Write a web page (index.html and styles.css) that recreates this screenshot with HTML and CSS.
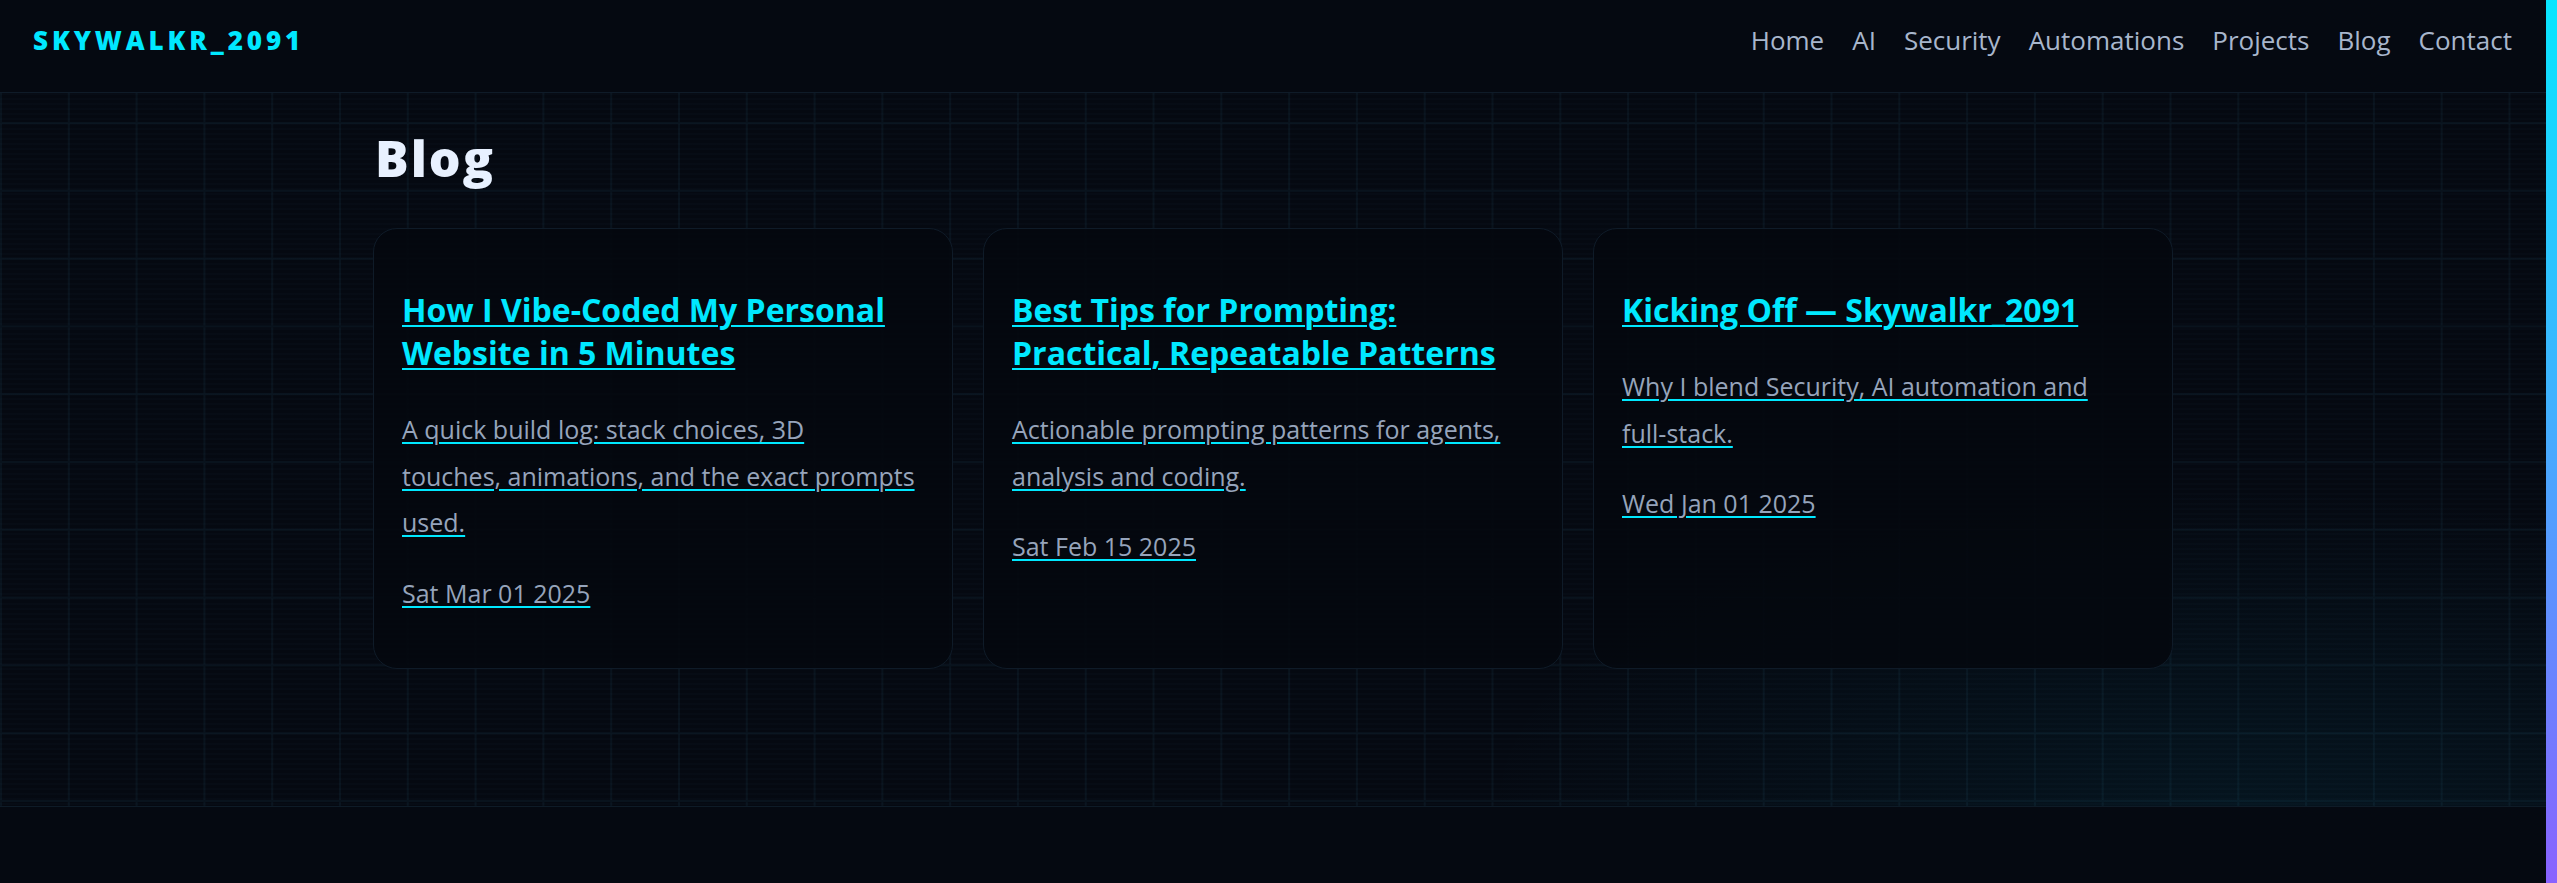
FILE: index.html
```html
<!DOCTYPE html>
<html lang="en">
<head>
<meta charset="utf-8">
<title>Blog — Skywalkr_2091</title>
<link rel="stylesheet" href="styles.css">
</head>
<body>
<div class="app">
  <div class="page">
    <header class="site-header">
      <a class="logo" href="#">SKYWALKR_2091</a>
      <nav class="nav">
        <a href="#">Home</a>
        <a href="#">AI</a>
        <a href="#">Security</a>
        <a href="#">Automations</a>
        <a href="#">Projects</a>
        <a href="#">Blog</a>
        <a href="#">Contact</a>
      </nav>
    </header>
    <main class="hero">
      <div class="container">
        <h1 class="page-title">Blog</h1>
        <div class="cards">
          <a class="card" href="#">
            <h3 class="card-title">How I Vibe-Coded My Personal Website in 5 Minutes</h3>
            <p class="card-desc">A quick build log: stack choices, 3D<br>touches, animations, and the exact prompts used.</p>
            <p class="card-date">Sat Mar 01 2025</p>
          </a>
          <a class="card" href="#">
            <h3 class="card-title">Best Tips for Prompting: Practical, Repeatable Patterns</h3>
            <p class="card-desc">Actionable prompting patterns for agents, analysis and coding.</p>
            <p class="card-date">Sat Feb 15 2025</p>
          </a>
          <a class="card" href="#">
            <h3 class="card-title">Kicking Off — Skywalkr_2091</h3>
            <p class="card-desc">Why I blend Security, AI automation and <span class="nowrap">full-stack.</span></p>
            <p class="card-date">Wed Jan 01 2025</p>
          </a>
        </div>
      </div>
    </main>
    <footer class="site-footer"></footer>
  </div>
  <div class="scrollbar"></div>
</div>
</body>
</html>
```

FILE: styles.css
```css
* { box-sizing: border-box; }

html, body {
  margin: 0;
  padding: 0;
  background: #050911;
}

body {
  font-family: "Open Sans", "Noto Sans", sans-serif;
  color: #a3b1c6;
}

.app {
  display: flex;
  width: 100%;
  height: 883px;
  overflow: hidden;
}

.page {
  flex: 1;
  display: flex;
  flex-direction: column;
  min-width: 0;
}

.scrollbar {
  width: 11px;
  flex: 0 0 11px;
  background: linear-gradient(to bottom, #08e6ff 0%, #3fb2ff 45%, #8a62ff 100%);
}

/* Header */
.site-header {
  height: 93px;
  flex: 0 0 93px;
  display: flex;
  justify-content: space-between;
  align-items: flex-start;
  padding: 22px 34px 0 33px;
  background: #050911;
  border-bottom: 1px solid #0f1b28;
}

.logo {
  font-size: 26px;
  line-height: 37.5px;
  font-weight: 800;
  letter-spacing: 0.15em;
  color: #00e8ff;
  text-decoration: none;
}

.nav {
  display: flex;
  gap: 28px;
}

.nav a {
  font-size: 26px;
  line-height: 37.5px;
  color: #a8b6cc;
  text-decoration: none;
}

/* Hero / grid section */
.hero {
  height: 714px;
  flex: 0 0 714px;
  border-bottom: 1px solid #0e1b27;
  padding-top: 35px;
  background-color: #050911;
  background-image:
    radial-gradient(ellipse 30% 45% at 88% 100%, rgba(0, 170, 210, 0.07), rgba(0, 170, 210, 0) 100%),
    repeating-linear-gradient(to bottom, rgba(90, 160, 220, 0.018) 0 2px, rgba(0, 0, 0, 0) 2px 5px),
    linear-gradient(to right, #09131d 0 2px, rgba(0, 0, 0, 0) 2px),
    linear-gradient(to bottom, #09131d 0 2px, rgba(0, 0, 0, 0) 2px);
  background-size: auto, auto, 67.8px 67.8px, 67.8px 67.8px;
  background-position: 0 0, 0 0, 0 29px, 0 29px;
}

.container {
  width: 1800px;
  margin: 0 auto;
}

.page-title {
  margin: 0 0 40px 2px;
  font-size: 50px;
  line-height: 60px;
  font-weight: 800;
  letter-spacing: 2px;
  color: #e8f1ff;
}

.cards {
  display: grid;
  grid-template-columns: repeat(3, 1fr);
  gap: 30px;
}

.card {
  display: block;
  padding: 28px;
  border: 1px solid #0f1b28;
  border-radius: 24px;
  background: rgba(4, 8, 14, 0.9);
  color: #00e8ff;
  text-decoration: underline;
  text-decoration-thickness: 2px;
  text-underline-offset: 3px;
}

.card-title {
  margin: 31px 0 0;
  font-size: 32px;
  line-height: 43px;
  font-weight: 700;
  color: #00e8ff;
}

.card-desc {
  margin: 32px 0 0;
  font-size: 25px;
  line-height: 46.5px;
  color: #96a4bb;
}

.nowrap {
  white-space: nowrap;
}

.card-date {
  margin: 24px 0 24px;
  font-size: 25px;
  line-height: 46.5px;
  color: #96a4bb;
}

.site-footer {
  flex: 1;
  background: #050911;
}
```
